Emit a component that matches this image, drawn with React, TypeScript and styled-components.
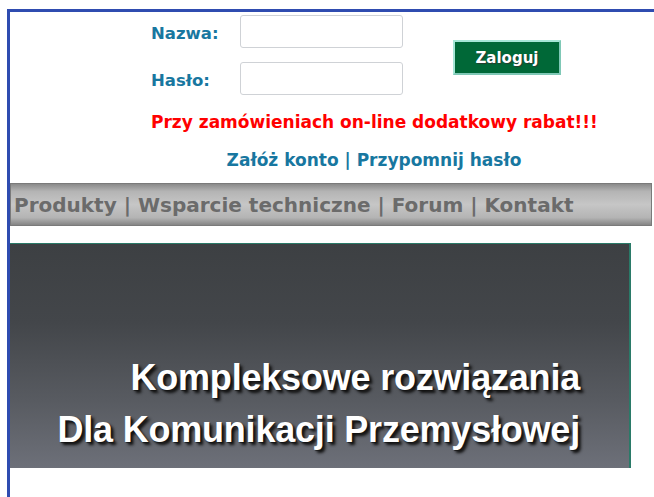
import React from "react";
import styled, { createGlobalStyle } from "styled-components";

const GlobalStyle = createGlobalStyle`
  body {
    margin: 0;
    background: #fff;
    font-family: "DejaVu Sans", Verdana, sans-serif;
  }
`;

const Page = styled.div`
  margin: 9px 0 0 7px;
  border-top: 3px solid #2f4cb0;
  border-left: 3px solid #2f4cb0;
  min-height: 490px;
`;

const LoginArea = styled.div`
  display: flex;
  flex-direction: column;
  align-items: flex-start;
  padding: 3px 0 0 141px;
`;

const LoginForm = styled.form`
  display: grid;
  grid-template-columns: 89px 163px 50px auto;
  grid-template-rows: 33px 33px;
  row-gap: 14px;
  align-items: center;
`;

const Label = styled.label`
  font-size: 16.5px;
  font-weight: bold;
  color: #1877a0;
  padding-top: 3px;
`;

const Field = styled.input`
  box-sizing: border-box;
  width: 163px;
  height: 33px;
  border: 1px solid #cfd2d6;
  border-radius: 3px;
  background: #fff;
`;

const SubmitCell = styled.div`
  grid-column: 4;
  grid-row: 1 / span 2;
  align-self: center;
  margin-top: 5px;
`;

const SubmitBtn = styled.button`
  box-sizing: border-box;
  width: 108px;
  height: 35px;
  background: #006837;
  border: 2px solid #a6e6d6;
  border-right-color: #7fc8b6;
  border-bottom-color: #7fc8b6;
  color: #fff;
  font-family: "DejaVu Sans", Verdana, sans-serif;
  font-size: 15px;
  font-weight: bold;
  text-shadow: 1px 1px 1px #2a3a30;
  padding: 0;
`;

const Notices = styled.div`
  width: 446px;
  margin-top: 17px;
  display: flex;
  flex-direction: column;
  gap: 18px;
`;

const Notice = styled.p<{ $tone: "red" | "blue" }>`
  margin: 0;
  text-align: center;
  white-space: nowrap;
  font-size: 17px;
  line-height: 20px;
  font-weight: bold;
  color: ${(p) => (p.$tone === "red" ? "#ff0000" : "#1877a0")};
`;

const NavBar = styled.nav`
  margin: 13px 2px 0 0;
  height: 43px;
  box-sizing: border-box;
  border: 1px solid #7a7a7a;
  background: linear-gradient(
    to bottom,
    #8a8a8a 0%,
    #b4b4b4 18%,
    #c6c6c6 50%,
    #b4b4b4 82%,
    #858585 100%
  );
  display: flex;
  align-items: center;
  padding-left: 3px;
`;

const NavLink = styled.a`
  font-size: 20px;
  font-weight: bold;
  color: #6b6b6b;
  text-decoration: none;
  white-space: pre;
`;

const Banner = styled.div`
  margin-top: 17px;
  width: 621px;
  height: 225px;
  box-sizing: border-box;
  border-top: 1px solid #2a7a68;
  border-right: 2px solid #2a7a68;
  background: linear-gradient(
    to bottom,
    #3d4043 0%,
    #43464a 35%,
    #585b61 70%,
    #6d7079 100%
  );
  display: flex;
  flex-direction: column;
  justify-content: flex-end;
  align-items: flex-end;
  padding: 0 49px 12px 0;
`;

const Slogan = styled.div`
  font-family: "Liberation Sans", Arial, sans-serif;
  font-weight: bold;
  font-size: 36px;
  line-height: 52px;
  letter-spacing: -0.2px;
  color: #fff;
  text-align: right;
  text-shadow: 3px 3px 3px #111, 1px 1px 1px #222;
`;

const links = ["Produkty", "Wsparcie techniczne", "Forum", "Kontakt"];

const App: React.FC = () => {
  return (
    <>
      <GlobalStyle />
      <Page>
        <LoginArea>
          <LoginForm onSubmit={(e) => e.preventDefault()}>
            <Label htmlFor="nazwa">Nazwa:</Label>
            <Field id="nazwa" type="text" />
            <span />
            <SubmitCell>
              <SubmitBtn type="submit">Zaloguj</SubmitBtn>
            </SubmitCell>
            <Label htmlFor="haslo">Hasło:</Label>
            <Field id="haslo" type="password" />
          </LoginForm>
          <Notices>
            <Notice $tone="red">Przy zamówieniach on-line dodatkowy rabat!!!</Notice>
            <Notice $tone="blue">Załóż konto | Przypomnij hasło</Notice>
          </Notices>
        </LoginArea>
        <NavBar>
          {links.map((l, i) => (
            <NavLink key={l} href="#">
              {l}
              {i < links.length - 1 ? " | " : ""}
            </NavLink>
          ))}
        </NavBar>
        <Banner>
          <Slogan>
            Kompleksowe rozwiązania
            <br />
            Dla Komunikacji Przemysłowej
          </Slogan>
        </Banner>
      </Page>
    </>
  );
};

export default App;
